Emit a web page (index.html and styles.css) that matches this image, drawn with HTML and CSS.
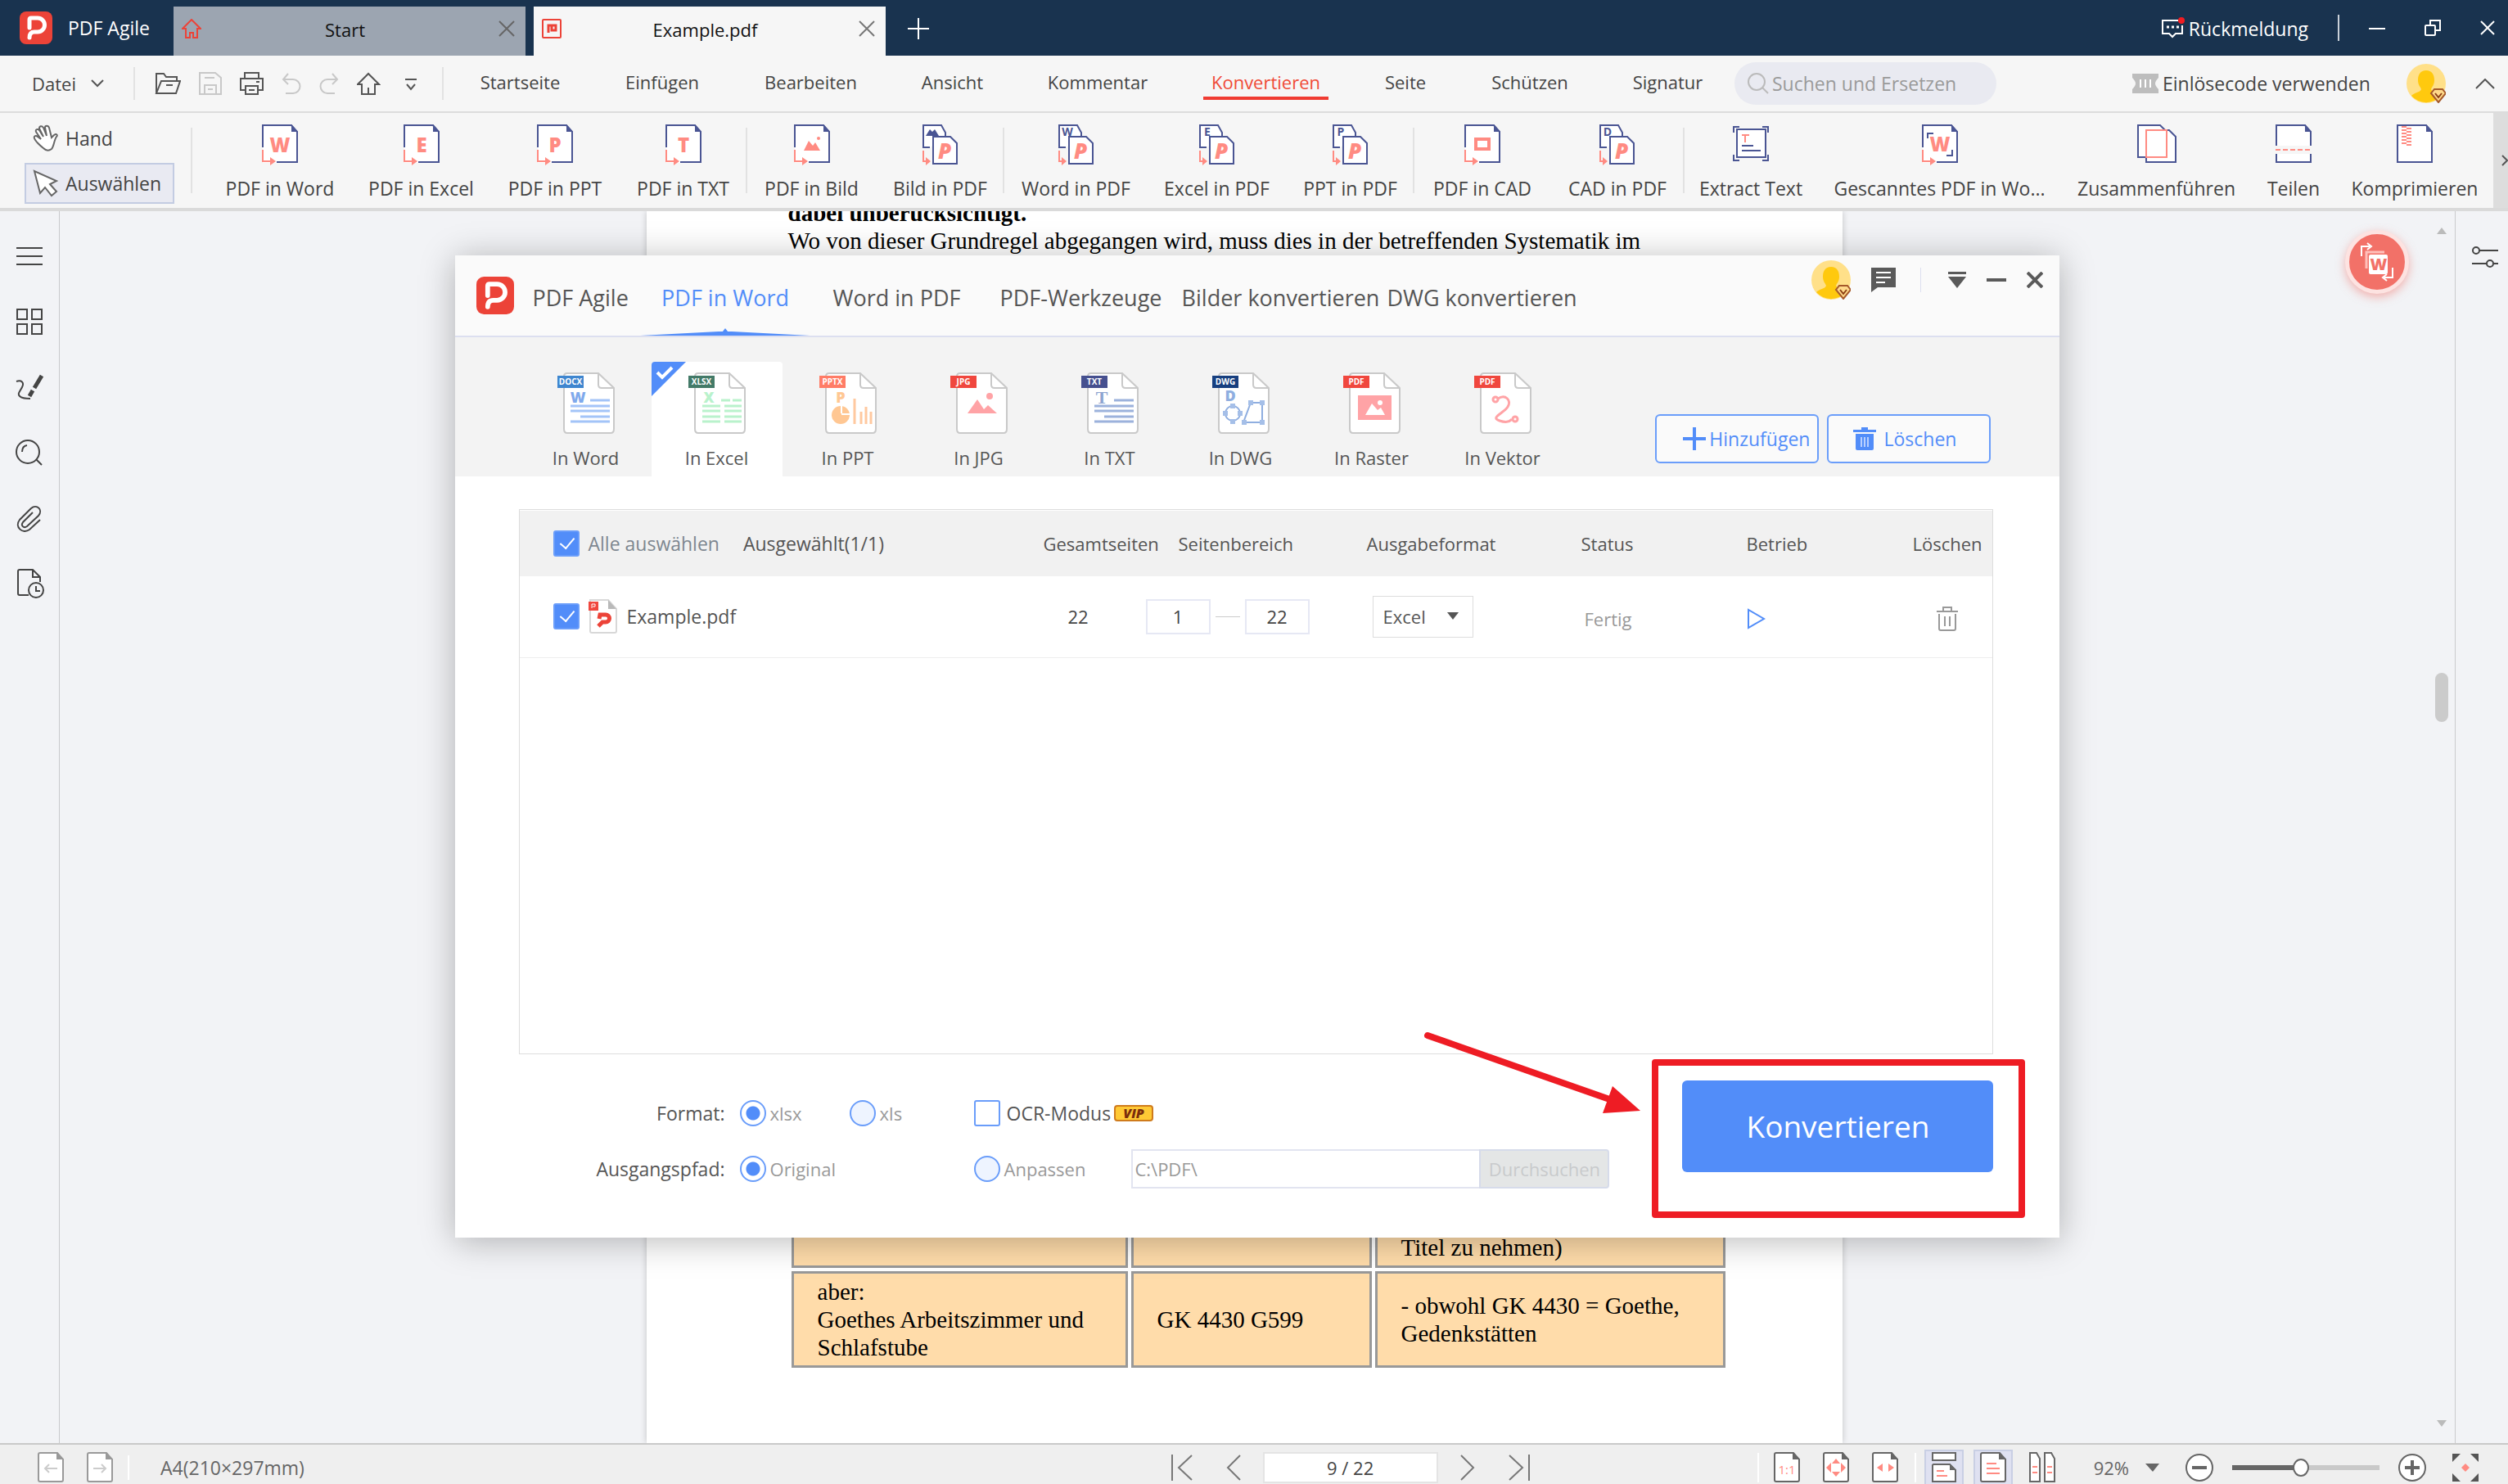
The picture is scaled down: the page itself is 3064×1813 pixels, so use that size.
FILE: index.html
```html
<!DOCTYPE html>
<html lang="de">
<head>
    <meta charset="UTF-8">
    <meta name="viewport" content="width=device-width, initial-scale=1.0">
    <title>PDF Agile</title>
    <link rel="stylesheet" href="styles.css">
</head>
<body>
    <!-- shared icon shapes -->
    <svg class="defs" width="0" height="0">
        <symbol id="logo" viewBox="0 0 40 40">
            <rect width="40" height="40" rx="8" fill="#ec4338"/>
            <path d="M12 20V10q0-2 2-2h8a8 8 0 0 1 0 17h-4q-6 0-6 7" fill="none" stroke="#fff" stroke-width="5" stroke-linecap="round" stroke-linejoin="round"/>
        </symbol>
        <symbol id="avatar" viewBox="0 0 48 48">
            <circle cx="24" cy="24" r="24" fill="#ffe089"/>
            <path d="M24 8c7 0 10 5 10 12 0 6-3 8-4 11 1 4 9 4 12 8a24 24 0 0 1-36 0c3-4 11-4 12-8-1-3-4-5-4-11 0-7 3-12 10-12z" fill="#ffc90e"/>
            <path d="M34 31h10l4 5-9 11-9-11z" fill="#ffd98a" stroke="#a5592a" stroke-width="2"/>
            <path d="M35 36l4 5 4-5" fill="none" stroke="#8a3d14" stroke-width="2"/>
        </symbol>
        <symbol id="doc" viewBox="0 0 44 54">
            <path d="M1 1h35l7 8v38H1z" fill="#fff"/>
            <path d="M1 28V1h35l7 8v37H18" fill="none" stroke="#4a5593" stroke-width="2"/>
            <path d="M36 0v9h8z" fill="#4a5593"/>
            <path d="M1 31v14h10" fill="none" stroke="#ff8b82" stroke-width="2"/>
            <path d="M10 40l7 5-7 5z" fill="#ff8b82"/>
        </symbol>
        <symbol id="plain" viewBox="0 0 44 54">
            <path d="M1 1h35l7 8v37H1z" fill="#fff" stroke="#4a5593" stroke-width="2"/>
            <path d="M36 0v9h8z" fill="#4a5593"/>
        </symbol>
        <symbol id="pair" viewBox="0 0 44 54">
            <path d="M9 28H1V1h22l5 9v6" fill="#fff" stroke="#4a5593" stroke-width="2"/>
            <path d="M13 15h21l8 8v25H13z" fill="#fff" stroke="#4a5593" stroke-width="2"/>
            <path d="M1 32v13h4" fill="none" stroke="#ff8b82" stroke-width="2"/>
            <path d="M4 40l6 5-6 5z" fill="#ff8b82"/>
            <text x="27" y="42" class="pair-p">P</text>
        </symbol>
        <symbol id="file" viewBox="0 0 70 76">
            <path d="M8 5q0-4 4-4h38l19 18v50q0 5-4 5H12q-4 0-4-5z" fill="#fff" stroke="#c9c9c9" stroke-width="2"/>
            <path d="M50 1v14q0 4 4 4h15" fill="none" stroke="#c9c9c9" stroke-width="2"/>
        </symbol>
        <symbol id="lines" viewBox="0 0 70 76">
            <path d="M40 34h24M16 41h48M16 47h48M28 54h36M16 60h48" fill="none" stroke="currentColor" stroke-width="3"/>
        </symbol>
        <symbol id="page" viewBox="0 0 32 38">
            <path d="M3 1h21l7 8v25q0 2-2 2H3q-2 0-2-2V3q0-2 2-2z" fill="#fff" stroke="currentColor" stroke-width="2"/>
            <path d="M23 0v9h9z" fill="currentColor"/>
        </symbol>
    </svg>

    <!-- title bar -->
    <header class="titlebar">
        <div class="brand">
            <svg width="40" height="40"><use href="#logo"/></svg>
            <span>PDF Agile</span>
        </div>
        <div class="file-tab">
            <svg width="24" height="24" viewBox="0 0 24 24" fill="none" stroke="#ec4338" stroke-width="2"><path d="M1 12L12 1l11 11h-4v11h-5v-6h-4v6H5V12z"/></svg>
            <span>Start</span>
            <button class="icon-btn" aria-label="Tab schließen"><svg width="20" height="20" viewBox="0 0 20 20" stroke="#666" stroke-width="2"><path d="M1 1l18 18M19 1L1 19"/></svg></button>
        </div>
        <div class="file-tab current">
            <svg width="24" height="24" viewBox="0 0 24 24" fill="none" stroke="#ec4338"><rect x="1" y="1" width="22" height="22" rx="1" stroke-width="2"/><path d="M8 17V8h9v6h-5V9" stroke-width="3"/></svg>
            <span>Example.pdf</span>
            <button class="icon-btn" aria-label="Tab schließen"><svg width="20" height="20" viewBox="0 0 20 20" stroke="#777" stroke-width="2"><path d="M1 1l18 18M19 1L1 19"/></svg></button>
        </div>
        <button class="icon-btn new-tab" aria-label="Neuer Tab"><svg width="26" height="26" viewBox="0 0 26 26" stroke="#fff" stroke-width="2"><path d="M13 0v26M0 13h26"/></svg></button>
        <div class="window-tools">
            <a href="#" class="feedback">
                <svg width="28" height="26" viewBox="0 0 28 26" fill="none" stroke="#fff" stroke-width="2"><path d="M20 4H1v16h8l4 4 4-4h8V10"/><path d="M6 12h3M12 12h3M18 12h3" stroke-width="3"/><circle cx="24" cy="4" r="4" fill="#f01c22" stroke="none"/></svg>
                <span>Rückmeldung</span>
            </a>
            <i class="divider"></i>
            <button class="icon-btn" aria-label="Minimieren"><svg width="20" height="20" viewBox="0 0 20 20" stroke="#fff" stroke-width="2"><path d="M0 11h20"/></svg></button>
            <button class="icon-btn" aria-label="Verkleinern"><svg width="20" height="20" viewBox="0 0 20 20" fill="none" stroke="#fff" stroke-width="2"><rect x="1" y="7" width="12" height="12" rx="1"/><path d="M7 7V1h12v12h-6"/></svg></button>
            <button class="icon-btn" aria-label="Schließen"><svg width="18" height="18" viewBox="0 0 18 18" stroke="#fff" stroke-width="2"><path d="M1 1l16 16M17 1L1 17"/></svg></button>
        </div>
    </header>

    <!-- menu -->
    <nav class="menubar">
        <button class="datei">Datei <svg width="16" height="10" viewBox="0 0 16 10" fill="none" stroke="#555" stroke-width="2"><path d="M1 1l7 7 7-7"/></svg></button>
        <div class="quick">
            <svg width="32" height="28" viewBox="0 0 32 28" fill="none" stroke="#555" stroke-width="2"><path d="M2 26V2h9l3 4h13v5M2 26L8 11h23l-5 15z"/><path d="M14 16h8"/></svg>
            <svg width="28" height="28" viewBox="0 0 28 28" fill="none" stroke="#c8c8c8" stroke-width="2"><path d="M1 1h19l7 6v20H1zM7 7h12M7 27V16h14v11M11 21h6"/></svg>
            <svg width="29" height="28" viewBox="0 0 29 28" fill="none" stroke="#555" stroke-width="2"><path d="M6 8V1h17v7M6 22H1V8h27v14h-5M7 17h15v10H7zM11 22h7M20 12h4"/></svg>
            <svg width="24" height="28" viewBox="0 0 24 28" fill="none" stroke="#c8c8c8" stroke-width="2"><path d="M8 2L2 9l6 6M2 9h12a8 8 0 0 1 0 17H5"/></svg>
            <svg width="24" height="28" viewBox="0 0 24 28" fill="none" stroke="#c8c8c8" stroke-width="2"><path d="M16 2l6 7-6 6M22 9H10a8 8 0 0 0 0 17h9"/></svg>
            <svg width="29" height="28" viewBox="0 0 29 28" fill="none" stroke="#555" stroke-width="2"><path d="M1 15L14 2l13 13h-5v12H6V15zM14 27v-8"/></svg>
            <svg class="more" width="14" height="28" viewBox="0 0 14 28" fill="none" stroke="#555" stroke-width="2"><path d="M0 9h14M2 15l5 6 5-6"/></svg>
        </div>
        <div class="menu-tabs">
            <a href="#">Startseite</a>
            <a href="#">Einfügen</a>
            <a href="#">Bearbeiten</a>
            <a href="#">Ansicht</a>
            <a href="#">Kommentar</a>
            <a href="#" class="active">Konvertieren</a>
            <a href="#">Seite</a>
            <a href="#">Schützen</a>
            <a href="#">Signatur</a>
        </div>
        <label class="search">
            <svg width="26" height="26" viewBox="0 0 26 26" fill="none" stroke="#bbb" stroke-width="2"><circle cx="11" cy="11" r="10"/><path d="M18 18l7 7"/></svg>
            <input type="text" placeholder="Suchen und Ersetzen" aria-label="Suchen und Ersetzen">
        </label>
        <div class="account">
            <a href="#" class="redeem">
                <svg width="32" height="24" viewBox="0 0 32 24"><path d="M0 0h32v5q-4 4-4 7t4 7v5H0v-5q4-4 4-7T0 5z" fill="#bdbdbd"/><path d="M10 7v10M16 7v10M22 7v10" stroke="#fff" stroke-width="2"/></svg>
                <span>Einlösecode verwenden</span>
            </a>
            <svg width="48" height="48"><use href="#avatar"/></svg>
            <button class="icon-btn" aria-label="Menüband ausblenden"><svg width="24" height="13" viewBox="0 0 24 13" fill="none" stroke="#555" stroke-width="2"><path d="M1 12L12 1l11 11"/></svg></button>
        </div>
    </nav>

    <!-- ribbon -->
    <section class="ribbon">
        <div class="modes">
            <button class="mode"><svg width="34" height="34" viewBox="0 0 34 34" fill="#fff" stroke="#666" stroke-width="2"><path d="M13 29C9 26 3 20 2 17s2-4 4-2l4 3L4 9c-1-3 2-4 4-2l5 8-5-10c0-3 3-4 5-1l4 10-2-10c0-3 4-3 5 0l3 12 3-3c3-2 5 0 3 2-3 4-3 12-6 15-4 3-7 2-10-1z"/></svg>Hand</button>
            <button class="mode selected"><svg width="34" height="34" viewBox="0 0 34 34" fill="#fff" stroke="#666" stroke-width="2"><path d="M2 2l7 27 6-7 8 10 6-5-8-9 8-4z"/></svg>Auswählen</button>
        </div>
        <div class="tools">
            <button><svg width="44" height="54"><use href="#doc"/><text x="22" y="34" class="letter">W</text></svg>PDF in Word</button>
            <button><svg width="44" height="54"><use href="#doc"/><text x="22" y="34" class="letter">E</text></svg>PDF in Excel</button>
            <button><svg width="44" height="54"><use href="#doc"/><text x="22" y="34" class="letter">P</text></svg>PDF in PPT</button>
            <button class="split"><svg width="44" height="54"><use href="#doc"/><text x="22" y="34" class="letter">T</text></svg>PDF in TXT</button>
            <button><svg width="44" height="54"><use href="#doc"/><path d="M12 32l6-12 5 6 3-4 6 10z" fill="#ff8b82"/><circle cx="30" cy="17" r="2" fill="#ff8b82"/></svg>PDF in Bild</button>
            <button class="split"><svg width="44" height="54"><use href="#pair"/><path d="M4 14l5-8 3 3 3-3 5 8z" fill="#4a5593"/></svg>Bild in PDF</button>
            <button><svg width="44" height="54"><use href="#pair"/><text x="11" y="14" class="small-letter">W</text></svg>Word in PDF</button>
            <button><svg width="44" height="54"><use href="#pair"/><text x="10" y="14" class="small-letter">E</text></svg>Excel in PDF</button>
            <button class="split"><svg width="44" height="54"><use href="#pair"/><text x="10" y="14" class="small-letter">P</text></svg>PPT in PDF</button>
            <button><svg width="44" height="54"><use href="#doc"/><rect x="14" y="18" width="16" height="12" fill="none" stroke="#ff8b82" stroke-width="4"/></svg>PDF in CAD</button>
            <button class="split"><svg width="44" height="54"><use href="#pair"/><text x="10" y="14" class="small-letter">D</text></svg>CAD in PDF</button>
            <button><svg width="44" height="54" viewBox="0 0 44 54" fill="none" stroke="#4a5593" stroke-width="2"><rect x="5" y="6" width="35" height="34" fill="#fff"/><path d="M1 10V3h7M36 3h7v7M43 37v7h-7M8 44H1v-7M11 26h14M11 32h23"/><path d="M11 13h9M15 13v9" stroke="#ff8b82"/></svg>Extract Text</button>
            <button><svg width="44" height="54"><use href="#doc"/><text x="22" y="33" class="letter">W</text><path d="M7 17v-6h7M37 31v7h-7" fill="none" stroke="#4a5593" stroke-width="2"/></svg>Gescanntes PDF in Wo...</button>
            <button><svg width="48" height="54" viewBox="0 0 48 54" fill="#fff" stroke="#4a5593" stroke-width="2"><path d="M1 1h27l8 8v31H1z"/><path d="M11 40v6h36V15l-8-8h-6" /><path d="M11 7h25v33H11z" stroke="#ff8b82"/></svg>Zusammenführen</button>
            <button><svg width="44" height="54" viewBox="0 0 44 54"><use href="#plain"/><path d="M0 26h44v10H0z" fill="#f6f6f6"/><path d="M0 31h44" stroke="#ff8b82" stroke-width="2" stroke-dasharray="6 3"/></svg>Teilen</button>
            <button><svg width="44" height="54" viewBox="0 0 44 54"><use href="#plain"/><path d="M9 2v24" stroke="#ff8b82" stroke-width="6" stroke-dasharray="2 2"/><path d="M15 4v22" stroke="#ff8b82" stroke-width="6" stroke-dasharray="2 2"/></svg>Komprimieren</button>
        </div>
        <button class="scroll-right" aria-label="Weiter"><svg width="8" height="14" viewBox="0 0 8 14" fill="none" stroke="#555" stroke-width="2"><path d="M1 1l6 6-6 6"/></svg></button>
    </section>

    <div class="main">
        <aside class="side">
            <svg width="36" height="36" viewBox="0 0 36 36"><path d="M2 8h32M2 18h32M2 28h32"/></svg>
            <svg width="36" height="36" viewBox="0 0 36 36"><path d="M3 3h12v12H3zM21 3h12v12H21zM3 21h12v12H3zM21 21h12v12H21z"/></svg>
            <svg width="36" height="36" viewBox="0 0 36 36"><path d="M2 11c6-2 10 1 7 7s-6 8-3 11 7 3 13 3"/><path d="M33 4l-9 15M22 22l-4 7" stroke-width="5"/></svg>
            <svg width="36" height="36" viewBox="0 0 36 36"><circle cx="16" cy="17" r="14"/><path d="M26 26l7 7M9 17q0-7 6-8"/></svg>
            <svg width="36" height="36" viewBox="0 0 36 36"><path d="M31 20L18 32c-8 6-19-3-12-12L20 6c7-6 15 2 9 9L15 28c-4 3-8-1-5-5l12-12"/></svg>
            <svg width="36" height="36" viewBox="0 0 36 36"><path d="M17 32H6q-2 0-2-2V3q0-2 2-2h16l9 9v6M22 1v9h9"/><circle cx="26" cy="26" r="9"/><path d="M26 21v6h5"/></svg>
        </aside>

        <div class="viewer">
            <div class="page">
                <p><b>dabei unberücksichtigt.</b><br>Wo von dieser Grundregel abgegangen wird, muss dies in der betreffenden Systematik im</p>
                <table class="doc-table">
                    <tr class="cut">
                        <td></td>
                        <td></td>
                        <td>Titel zu nehmen)</td>
                    </tr>
                    <tr>
                        <td>aber:<br>Goethes Arbeitszimmer und<br>Schlafstube</td>
                        <td>GK 4430 G599</td>
                        <td>- obwohl GK 4430 = Goethe,<br>Gedenkstätten</td>
                    </tr>
                </table>
            </div>
        </div>
        <div class="scrollbar">
            <svg width="12" height="8" viewBox="0 0 12 8" fill="#bbb"><path d="M0 8l6-8 6 8z"/></svg>
            <i class="thumb"></i>
            <svg width="12" height="8" viewBox="0 0 12 8" fill="#bbb"><path d="M0 0l6 8 6-8z"/></svg>
        </div>

        <button class="float-convert" aria-label="Konvertieren">
            <svg width="44" height="48" viewBox="0 0 44 48" fill="none" stroke="#fff" stroke-width="2"><path d="M3 17V5h10M10 1l5 4-5 4"/><path d="M41 31v12H31M34 39l-5 4 5 4"/><path d="M9 32V12h22" stroke="#ffc0ba" stroke-width="3"/><rect x="12" y="15" width="23" height="24" rx="2" fill="#fff" stroke="none"/><text x="24" y="34" class="float-w">W</text></svg>
        </button>

        <!-- converter window -->
        <section class="dialog">
            <header class="dialog-head">
                <div class="dialog-brand">
                    <svg width="46" height="46"><use href="#logo"/></svg>
                    <span>PDF Agile</span>
                </div>
                <nav class="dialog-tabs">
                    <a href="#" class="active">PDF in Word</a>
                    <a href="#">Word in PDF</a>
                    <a href="#">PDF-Werkzeuge</a>
                    <a href="#">Bilder konvertieren</a>
                    <a href="#">DWG konvertieren</a>
                </nav>
                <div class="dialog-tools">
                    <svg width="48" height="48"><use href="#avatar"/></svg>
                    <svg width="30" height="30" viewBox="0 0 30 30"><path d="M0 0h30v24H8l-8 6z" fill="#5a5a5a"/><path d="M6 6h18M6 12h18M6 18h11" stroke="#fff" stroke-width="2"/></svg>
                    <i class="divider"></i>
                    <button class="icon-btn" aria-label="Menü"><svg width="22" height="20" viewBox="0 0 22 20" fill="#5a5a5a"><path d="M0 0h22v3H0zM0 6h22L11 20z"/></svg></button>
                    <button class="icon-btn" aria-label="Minimieren"><svg width="24" height="20" viewBox="0 0 24 20"><path d="M0 10h24" stroke="#5a5a5a" stroke-width="4"/></svg></button>
                    <button class="icon-btn" aria-label="Schließen"><svg width="20" height="20" viewBox="0 0 20 20" stroke="#5a5a5a" stroke-width="4"><path d="M1 1l18 18M19 1L1 19"/></svg></button>
                </div>
            </header>

            <div class="formats">
                <button class="format"><svg width="70" height="76"><use href="#file"/><use href="#lines" color="#a3c4f8"/><text x="25" y="37" class="mark" fill="#7fa9ec">W</text><rect y="4" width="32" height="15" fill="#3f86cf"/><text x="16" y="15" class="tag">DOCX</text></svg>In Word</button>
                <button class="format picked"><svg class="corner" width="42" height="42" viewBox="0 0 42 42"><path d="M0 4q0-4 4-4h38L0 42z" fill="#528df9"/><path d="M7 13l6 6L25 7" fill="none" stroke="#fff" stroke-width="4"/></svg><svg width="70" height="76"><use href="#file"/><path d="M40 34h11M54 34h11M17 41h22M44 41h21M17 47h22M44 47h21M17 54h22M44 54h21M17 60h22M44 60h21" stroke="#b9f2cc" stroke-width="3"/><text x="25" y="37" class="mark" fill="#b9f2cc">X</text><rect y="4" width="32" height="15" fill="#437a68"/><text x="16" y="15" class="tag">XLSX</text></svg>In Excel</button>
                <button class="format"><svg width="70" height="76"><use href="#file"/><circle cx="26" cy="52" r="11" fill="#ffc793"/><path d="M27 50V40M27 51h11" stroke="#fff" stroke-width="2"/><path d="M43 63V32M51 63V48M57 63V42M63 63V48" stroke="#ffc9a0" stroke-width="3"/><text x="26" y="37" class="mark" fill="#ffc793">P</text><rect y="4" width="32" height="15" fill="#ff7c66"/><text x="16" y="15" class="tag">PPTX</text></svg>In PPT</button>
                <button class="format"><svg width="70" height="76"><use href="#file"/><path d="M21 50l12-17 8 12 5-5 11 10z" fill="#ffa3a6"/><circle cx="48" cy="29" r="4" fill="#ffa3a6"/><rect y="4" width="32" height="15" fill="#f0473e"/><text x="16" y="15" class="tag">JPG</text></svg>In JPG</button>
                <button class="format"><svg width="70" height="76"><use href="#file"/><use href="#lines" color="#9cb2dc"/><text x="25" y="38" class="mark serif" fill="#8ea4d0">T</text><rect y="4" width="32" height="15" fill="#46508f"/><text x="16" y="15" class="tag">TXT</text></svg>In TXT</button>
                <button class="format"><svg width="70" height="76"><use href="#file"/><g fill="none" stroke="#8faee0" stroke-width="2"><circle cx="25" cy="50" r="9"/><path d="M38 61l9-24h14v24z"/></g><path d="M22 38h6v6h-6zM22 57h6v6h-6zM13 47h6v6h-6zM31 47h6v6h-6zM36 58h6v6h-6zM58 58h6v6h-6zM44 34h6v6h-6zM58 34h6v6h-6z" fill="#a5bfe8"/><text x="22" y="35" class="mark" fill="#8faee0">D</text><rect y="4" width="32" height="15" fill="#173f7f"/><text x="16" y="15" class="tag">DWG</text></svg>In DWG</button>
                <button class="format"><svg width="70" height="76"><use href="#file"/><rect x="18" y="28" width="41" height="30" fill="#ffa3a6"/><path d="M27 52l8-14 7 8 4-3 5 9z" fill="#fff"/><circle cx="45" cy="37" r="3" fill="#fff"/><rect y="4" width="32" height="15" fill="#f0473e"/><text x="16" y="15" class="tag">PDF</text></svg>In Raster</button>
                <button class="format"><svg width="70" height="76"><use href="#file"/><g fill="none" stroke="#ffa3a6" stroke-width="3"><path d="M29 32c9-6 17 2 12 10s-22 13-10 17 14-1 15-2"/><circle cx="26" cy="33" r="3"/><circle cx="50" cy="57" r="3"/></g><rect y="4" width="32" height="15" fill="#f0473e"/><text x="16" y="15" class="tag">PDF</text></svg>In Vektor</button>
                <div class="list-actions">
                    <button class="outline"><svg width="28" height="28" viewBox="0 0 28 28" stroke="#528df9" stroke-width="4"><path d="M14 0v28M0 14h28"/></svg>Hinzufügen</button>
                    <button class="outline wide"><svg width="28" height="28" viewBox="0 0 28 28"><path d="M0 3h28v3H0zM10 0h8v4h-8zM3 8h22v18q0 2-2 2H5q-2 0-2-2z" fill="#528df9"/><path d="M10 12v12M14 12v12M18 12v12" stroke="#b9d0ff" stroke-width="2"/></svg>Löschen</button>
                </div>
            </div>

            <div class="list">
                <table class="files">
                    <colgroup>
                        <col class="c-name"><col class="c-pages"><col class="c-range"><col class="c-format"><col class="c-status"><col class="c-run"><col>
                    </colgroup>
                    <thead>
                        <tr>
                            <th>
                                <div class="name-cell">
                                    <input type="checkbox" class="check" id="all" checked>
                                    <label for="all" class="muted">Alle auswählen</label>
                                    <span class="count">Ausgewählt(1/1)</span>
                                </div>
                            </th>
                            <th>Gesamtseiten</th>
                            <th class="indent">Seitenbereich</th>
                            <th>Ausgabeformat</th>
                            <th>Status</th>
                            <th>Betrieb</th>
                            <th>Löschen</th>
                        </tr>
                    </thead>
                    <tbody>
                        <tr>
                            <td>
                                <div class="name-cell">
                                    <input type="checkbox" class="check" id="f1" checked>
                                    <svg width="36" height="42" viewBox="0 0 36 42"><path d="M2 1h22l10 11v27q0 2-2 2H4q-2 0-2-2z" fill="#fff" stroke="#d8d8d8" stroke-width="2"/><path d="M24 1v11h10z" fill="#b9b9b9"/><rect y="3" width="12" height="11" fill="#f0473e"/><path d="M4 11V6h4v3H5" fill="none" stroke="#fff" stroke-width="1"/><path d="M13 24l1-5h7a4 4 0 0 1 0 9h-4l-5 5" fill="none" stroke="#ec4338" stroke-width="5"/></svg>
                                    <label for="f1">Example.pdf</label>
                                </div>
                            </td>
                            <td class="pages">22</td>
                            <td>
                                <div class="range">
                                    <input type="text" value="1" aria-label="Von Seite">
                                    <i></i>
                                    <input type="text" value="22" aria-label="Bis Seite">
                                </div>
                            </td>
                            <td>
                                <div class="select-box">
                                    <select aria-label="Ausgabeformat"><option>Excel</option></select>
                                </div>
                            </td>
                            <td class="state">Fertig</td>
                            <td class="run"><button class="icon-btn" aria-label="Starten"><svg width="24" height="26" viewBox="0 0 24 26" fill="none" stroke="#528df9" stroke-width="2"><path d="M2 2v22l19-11z"/></svg></button></td>
                            <td class="remove"><button class="icon-btn" aria-label="Löschen"><svg width="26" height="30" viewBox="0 0 26 30" fill="none" stroke="#999" stroke-width="2"><path d="M0 6h26M8 6V1h10v5M3 9v18q0 2 2 2h16q2 0 2-2V9M10 12v12M16 12v12"/></svg></button></td>
                        </tr>
                    </tbody>
                </table>
            </div>

            <footer class="options">
                <div class="option-grid">
                    <span class="caption">Format:</span>
                    <div class="choices">
                        <label class="pair-label"><input type="radio" name="format" checked>xlsx</label>
                        <label class="pair-label"><input type="radio" name="format">xls</label>
                    </div>
                    <label class="pair-label dark"><input type="checkbox" class="check" >OCR-Modus<svg width="48" height="20" viewBox="0 0 48 20"><rect x="1" y="1" width="46" height="18" rx="3" fill="#ffc935" stroke="#cf7b1c" stroke-width="2"/><text x="24" y="16" class="vip">VIP</text></svg></label>
                    <span class="caption">Ausgangspfad:</span>
                    <label class="pair-label"><input type="radio" name="path" checked>Original</label>
                    <div class="custom">
                        <label class="pair-label"><input type="radio" name="path">Anpassen</label>
                        <div class="path">
                            <input type="text" value="C:\PDF\" aria-label="Pfad">
                            <button disabled>Durchsuchen</button>
                        </div>
                    </div>
                </div>
                <button class="convert">Konvertieren</button>
            </footer>

            <!-- callout: arrow and frame round the convert button -->
            <svg class="arrow" width="270" height="106" viewBox="0 0 270 106"><path d="M8 8l228 80" stroke="#ee1c24" stroke-width="8" stroke-linecap="round"/><path d="M234 70l34 30-46 3z" fill="#ee1c24"/></svg>
            <i class="frame"></i>
        </section>

        <aside class="side right">
            <svg width="36" height="36" viewBox="0 0 36 36"><circle cx="7" cy="10" r="4"/><path d="M11 10h23M2 26h18M28 26h6"/><circle cx="24" cy="26" r="4"/></svg>
        </aside>
    </div>

    <!-- status bar -->
    <footer class="statusbar">
        <div class="status-left">
            <svg width="32" height="38" color="#999"><use href="#page"/><path d="M24 20H9M14 15l-5 5 5 5" fill="none" stroke="#ccc" stroke-width="2"/></svg>
            <svg width="32" height="38" color="#999"><use href="#page"/><path d="M8 20h15M18 15l5 5-5 5" fill="none" stroke="#ccc" stroke-width="2"/></svg>
            <span>A4(210×297mm)</span>
        </div>
        <div class="pager">
            <button class="icon-btn" aria-label="Erste Seite"><svg width="26" height="32" viewBox="0 0 26 32"><path d="M1 0v32M25 1L9 16l16 15"/></svg></button>
            <button class="icon-btn" aria-label="Vorherige Seite"><svg width="18" height="32" viewBox="0 0 18 32"><path d="M17 1L2 16l15 15"/></svg></button>
            <input type="text" value="9 / 22" aria-label="Seite">
            <button class="icon-btn" aria-label="Nächste Seite"><svg width="18" height="32" viewBox="0 0 18 32"><path d="M1 1l15 15L1 31"/></svg></button>
            <button class="icon-btn" aria-label="Letzte Seite"><svg width="26" height="32" viewBox="0 0 26 32"><path d="M25 0v32M1 1l16 15L1 31"/></svg></button>
        </div>
        <div class="status-right">
            <i class="bar"></i>
            <button class="view" aria-label="Originalgröße"><svg width="32" height="38"><use href="#page"/><text x="16" y="27" class="one">1:1</text></svg></button>
            <button class="view" aria-label="Ganze Seite"><svg width="32" height="38"><use href="#page"/><path d="M16 8l5 6H11zM16 30l-5-6h10zM10 13v12l-6-6zM22 13v12l6-6z" fill="#ff8b82"/></svg></button>
            <button class="view" aria-label="Seitenbreite"><svg width="32" height="38"><use href="#page"/><path d="M13 14v10l-7-5zM20 14v10l7-5z" fill="#ff8b82"/></svg></button>
            <i class="bar"></i>
            <button class="view on" aria-label="Fortlaufend"><svg width="32" height="38" viewBox="0 0 32 38"><path d="M2 1h28v9H2zM3 15h20l7 7v14H2V16z" fill="#fff" stroke="#666" stroke-width="2"/><path d="M23 14v8h8z" fill="#666"/><path d="M7 23h9M7 29h13" stroke="#ff8b82" stroke-width="2"/></svg></button>
            <button class="view on" aria-label="Einzelseite"><svg width="32" height="38"><use href="#page"/><path d="M8 14h12M8 20h16M8 26h16" stroke="#ff8b82" stroke-width="2"/></svg></button>
            <button class="view" aria-label="Doppelseite"><svg width="32" height="38" viewBox="0 0 32 38"><path d="M1 1h8l4 7v28H1zM19 1h8l4 7v28H19z" fill="#fff" stroke="#666" stroke-width="2"/><path d="M4 18h6M4 25h6M22 18h6M22 25h6" stroke="#ff8b82" stroke-width="2"/></svg></button>
            <span class="zoom">92%</span>
            <svg width="17" height="10" viewBox="0 0 17 10" fill="#666"><path d="M0 0h17l-8 10z"/></svg>
            <button class="icon-btn minus" aria-label="Verkleinern"><svg width="36" height="36" viewBox="0 0 36 36" fill="#fff" stroke="#666" stroke-width="2"><circle cx="18" cy="18" r="16"/><path d="M9 18h18" stroke-width="4"/></svg></button>
            <input type="range" min="0" max="100" value="46" aria-label="Zoom">
            <button class="icon-btn" aria-label="Vergrößern"><svg width="36" height="36" viewBox="0 0 36 36" fill="#fff" stroke="#666" stroke-width="2"><circle cx="18" cy="18" r="16"/><path d="M9 18h18M18 9v18" stroke-width="4"/></svg></button>
            <button class="icon-btn full" aria-label="Vollbild"><svg width="32" height="34" viewBox="0 0 32 34"><path d="M0 0h10L0 10zM32 0H22l10 10zM0 34h10L0 24zM32 34H22l10-10z" fill="#555"/><path d="M16 12l5 5-5 5-5-5z" fill="#ff8b82"/></svg></button>
        </div>
    </footer>
</body>
</html>
```
FILE: styles.css
```css
* {
    box-sizing: border-box;
    margin: 0;
    padding: 0;
}
body {
    display: flex;
    flex-direction: column;
    height: 100vh;
    overflow: hidden;
    font-family: "Open Sans", "Noto Sans", sans-serif;
    font-size: 22px;
    line-height: 30px;
    color: #444;
    background: #f2f3f6;
}
button,
input,
select {
    font: inherit;
    color: inherit;
    border: 0;
    background: none;
    outline: 0;
}
a {
    color: inherit;
    text-decoration: none;
}
svg {
    display: block;
    flex: none;
}
.defs {
    display: none;
}
.icon-btn {
    display: flex;
    flex: none;
}

/* title bar */
.titlebar {
    display: flex;
    flex: none;
    align-items: flex-end;
    height: 68px;
    padding-right: 16px;
    background: #19334f;
    color: #fff;
}
.brand {
    display: flex;
    align-items: center;
    gap: 19px;
    width: 212px;
    height: 68px;
    padding-left: 24px;
    font-size: 23px;
}
.file-tab {
    display: flex;
    align-items: center;
    width: 430px;
    height: 60px;
    margin-right: 10px;
    padding: 0 13px 20px 10px;
    background: #9ca5b1;
    color: #111;
}
.file-tab span {
    flex: 1;
    padding: 16px 12px 0 0;
    text-align: center;
}
.file-tab svg {
    margin-top: 14px;
}
.file-tab.current {
    background: #f6f6f6;
}
.new-tab {
    margin: 0 0 20px 17px;
}
.window-tools {
    display: flex;
    align-items: center;
    gap: 48px;
    height: 68px;
    margin-left: auto;
}
.feedback {
    display: flex;
    align-items: center;
    gap: 5px;
}
.feedback span {
    padding-top: 2px;
    font-size: 23px;
}
.window-tools .divider {
    width: 2px;
    height: 32px;
    margin: 0 -12px;
    background: #c9d0d8;
}

/* menu */
.menubar {
    display: flex;
    flex: none;
    align-items: center;
    height: 70px;
    padding-right: 16px;
    border-bottom: 2px solid #dcdcdc;
    background: #f6f6f6;
}
.datei {
    display: flex;
    align-items: center;
    gap: 18px;
    width: 165px;
    height: 40px;
    padding-left: 39px;
    border-right: 2px solid #e2e2e2;
}
.quick {
    display: flex;
    align-items: center;
    gap: 22px;
    width: 377px;
    height: 40px;
    padding-left: 24px;
    border-right: 2px solid #e2e2e2;
}
.quick .more {
    margin-left: 8px;
}
.menu-tabs {
    display: grid;
    flex: 1;
    grid-template-columns: 175fr 172fr 191fr 155fr 200fr 211fr 130fr 174fr 163fr;
    margin-left: 6px;
    text-align: center;
}
.menu-tabs a {
    justify-self: center;
    height: 40px;
    padding: 3px 10px 0;
    border-bottom: 4px solid transparent;
}
.menu-tabs .active {
    border-color: #f03b32;
    color: #f04a37;
}
.search {
    display: flex;
    align-items: center;
    gap: 4px;
    width: 320px;
    height: 52px;
    padding-left: 16px;
    border-radius: 26px;
    background: #e9eaf1;
}
.search input {
    width: 250px;
    font-size: 23px;
}
.search input::placeholder {
    color: #9a9a9a;
    opacity: 1;
}
.account {
    display: flex;
    align-items: center;
    justify-content: space-between;
    width: 443px;
    margin-left: 166px;
}
.redeem {
    display: flex;
    align-items: center;
    gap: 5px;
    margin-right: 8px;
    font-size: 23px;
}

/* ribbon */
.ribbon {
    display: flex;
    flex: none;
    height: 120px;
    border-bottom: 4px solid #dadada;
    background: #f6f6f6;
}
.modes {
    display: flex;
    flex-direction: column;
    width: 255px;
    padding: 6px 42px 0 30px;
    position: relative;
}
.modes::after,
.split::after {
    content: "";
    position: absolute;
    right: 20px;
    top: 18px;
    width: 2px;
    height: 80px;
    background: #e2e2e2;
}
.mode {
    display: flex;
    align-items: center;
    gap: 6px;
    height: 51px;
    margin-bottom: 5px;
    padding-left: 8px;
    border: 2px solid transparent;
    font-size: 23px;
}
.selected {
    border-color: #c3cce2;
    background: #e9eaf2;
}
.tools {
    display: grid;
    flex: 1;
    grid-template-columns: 174fr 171fr 156fr 157fr 157fr 157fr 175fr 169fr 157fr 166fr 164fr 162fr 299fr 231fr 104fr 192fr;
}
.tools button {
    display: flex;
    flex-direction: column;
    align-items: center;
    gap: 9px;
    position: relative;
    padding-top: 14px;
    font-size: 23px;
    white-space: nowrap;
}
.tools .split::after {
    right: 0;
}
.letter {
    fill: #ff8b82;
    font-size: 24px;
    font-weight: 800;
    text-anchor: middle;
}
.small-letter {
    fill: #4a5593;
    font-size: 14px;
    font-weight: 700;
    text-anchor: middle;
}
.pair-p {
    fill: #ff8b82;
    font-size: 26px;
    font-style: italic;
    font-weight: 800;
    text-anchor: middle;
}
.scroll-right {
    display: flex;
    align-items: center;
    justify-content: flex-end;
    width: 18px;
    background: #ddd;
}

/* work area */
.main {
    display: flex;
    flex: 1;
    min-height: 0;
    position: relative;
}
.side {
    display: flex;
    flex-direction: column;
    align-items: center;
    gap: 44px;
    width: 73px;
    padding-top: 37px;
    border-right: 1px solid #c9cacc;
}
.side svg {
    fill: none;
    stroke: #444;
    stroke-width: 2;
}
.side.right {
    width: 65px;
    padding-top: 38px;
    padding-left: 8px;
    border-right: 0;
    border-left: 1px solid #c9cacc;
}
.viewer {
    display: flex;
    flex: 1;
    justify-content: center;
    overflow: hidden;
}
.page {
    display: flex;
    flex-direction: column;
    justify-content: space-between;
    width: 50.5%;
    padding: 0 0 88px 173px;
    background: #fff;
    box-shadow: 0 0 8px rgba(0, 0, 0, .2);
    font: 29px/34px "Liberation Serif", "Times New Roman", serif;
    color: #000;
}
.page p {
    margin: -15px 0 0;
    white-space: nowrap;
}
.doc-table {
    width: 1149px;
    border-spacing: 4px;
    table-layout: fixed;
}
.doc-table td {
    width: 294px;
    padding: 5px 0 5px 29px;
    border: 3px solid #999;
    background: #ffdcaa;
}
.doc-table td:first-child {
    width: 411px;
}
.doc-table td:last-child {
    width: auto;
}
.doc-table .cut td {
    height: 80px;
    vertical-align: bottom;
}
.scrollbar {
    display: flex;
    flex-direction: column;
    align-items: center;
    justify-content: space-between;
    width: 31px;
    padding: 20px 1px 20px 0;
    position: relative;
}
.thumb {
    position: absolute;
    top: 564px;
    width: 16px;
    height: 60px;
    border-radius: 8px;
    background: #cbcbcb;
}
.float-convert {
    display: flex;
    align-items: center;
    justify-content: center;
    position: absolute;
    top: 23px;
    right: 121px;
    width: 78px;
    height: 78px;
    border: 5px solid #fde3e1;
    border-radius: 50%;
    background: #f27168;
    box-shadow: 0 4px 12px rgba(242, 113, 104, .5);
}
.float-w {
    fill: #f27168;
    stroke: none;
    font-size: 20px;
    font-weight: 800;
    text-anchor: middle;
}

/* converter window */
.dialog {
    display: flex;
    flex-direction: column;
    position: absolute;
    top: 54px;
    right: 65px;
    bottom: 251px;
    left: 73px;
    width: 64%;
    margin: 0 auto;
    background: #fff;
    box-shadow: 0 4px 40px rgba(0, 0, 0, .28);
    color: #555;
}
.dialog-head {
    display: flex;
    flex: none;
    height: 100px;
    border-bottom: 2px solid #dcdff0;
    background: #fafafa;
    font-size: 27px;
}
.dialog-brand {
    display: flex;
    align-items: center;
    gap: 23px;
    width: 227px;
    padding-left: 26px;
}
.dialog-brand span {
    padding-top: 6px;
}
.dialog-tabs {
    display: grid;
    grid-template-columns: 207px 212px 238px 250px 242px;
    padding-top: 37px;
    text-align: center;
    white-space: nowrap;
}
.dialog-tabs a {
    position: relative;
}
.dialog-tabs .active {
    color: #528df9;
}
.dialog-tabs .active::before {
    content: "";
    position: absolute;
    right: 0;
    bottom: 0;
    left: 0;
    height: 5px;
    background: #528df9;
    clip-path: polygon(0 100%, 46% 0, 54% 0, 100% 100%);
}
.dialog-tabs .active::after {
    content: "";
    position: absolute;
    bottom: 0;
    left: 50%;
    margin-left: -7px;
    border: 7px solid transparent;
    border-top: 0;
    border-bottom: 9px solid #528df9;
}
.dialog-tools {
    display: flex;
    align-items: center;
    gap: 25px;
    height: 60px;
    margin-left: auto;
    padding-right: 20px;
}
.dialog-tools .divider {
    width: 1px;
    height: 30px;
    margin: 0 8px 0 5px;
    background: #dcdff0;
}
.formats {
    display: flex;
    flex: none;
    align-items: flex-end;
    height: 170px;
    padding-left: 80px;
    background: #f3f3f3;
}
.format {
    display: flex;
    flex-direction: column;
    align-items: center;
    gap: 13px;
    position: relative;
    width: 160px;
    height: 140px;
    padding-top: 13px;
    border-radius: 4px 4px 0 0;
}
.picked {
    background: #fff;
}
.corner {
    position: absolute;
    top: 0;
    left: 0;
}
.mark {
    font-size: 18px;
    font-weight: 800;
    text-anchor: middle;
}
.serif {
    font-family: "Liberation Serif", serif;
    font-size: 22px;
}
.tag {
    fill: #fff;
    font-size: 10px;
    font-weight: 700;
    text-anchor: middle;
}
.list-actions {
    display: flex;
    gap: 10px;
    margin-left: auto;
    padding: 0 84px 16px 0;
}
.outline {
    display: flex;
    align-items: center;
    justify-content: flex-end;
    gap: 4px;
    width: 200px;
    height: 60px;
    padding-right: 9px;
    border: 2px solid #6a9dfa;
    border-radius: 6px;
    background: #fafafa;
    color: #528df9;
    font-size: 23px;
}
.wide {
    gap: 10px;
    padding-right: 40px;
}

/* file list */
.list {
    flex: 1;
    margin: 40px 81px 0 78px;
    border: 1px solid #ddd;
    padding-top: 1px;
}
.files {
    width: 100%;
    border-collapse: collapse;
    table-layout: fixed;
}
.files th {
    height: 80px;
    background: #f1f1f1;
    font-weight: 400;
    text-align: left;
    white-space: nowrap;
}
.files td {
    height: 99px;
    border-bottom: 1px solid #eee;
}
.c-name { width: 640px; }
.c-pages { width: 125px; }
.c-range { width: 270px; }
.c-format { width: 262px; }
.c-status { width: 202px; }
.c-run { width: 203px; }
.name-cell {
    display: flex;
    align-items: center;
    gap: 11px;
    padding-left: 41px;
    font-size: 23px;
}
.count {
    margin-left: 18px;
}
.muted {
    color: #7e8790;
}
.files .indent {
    padding-left: 40px;
}
.check {
    appearance: none;
    flex: none;
    width: 32px;
    height: 32px;
    border: 2px solid #6a9dfa;
    border-radius: 3px;
    background: #fff;
}
.check:checked {
    background: #528df9;
}
.check:checked::after {
    content: "";
    display: block;
    width: 8px;
    height: 15px;
    margin: 3px 0 0 10px;
    border: solid #fff;
    border-width: 0 2px 2px 0;
    transform: rotate(40deg);
}
.files .pages {
    padding-left: 30px;
    color: #444;
}
.range {
    display: flex;
    align-items: center;
    gap: 6px;
}
.range input {
    width: 79px;
    height: 43px;
    border: 2px solid #e6e8f4;
    text-align: center;
    color: #444;
}
.range i {
    width: 30px;
    height: 1px;
    background: #ccc;
}
.select-box {
    position: relative;
    width: 123px;
    margin-left: 7px;
}
.select-box::after {
    content: "";
    position: absolute;
    top: 20px;
    right: 18px;
    border: 7px solid transparent;
    border-top: 9px solid #555;
    border-bottom: 0;
}
.select-box select {
    appearance: none;
    width: 100%;
    height: 51px;
    padding-left: 12px;
    border: 1px solid #ddd;
}
.files .state,
.files .run,
.files .remove {
    padding-top: 6px;
}
.files .state {
    padding-left: 4px;
    color: #999;
}
.files .remove {
    padding-left: 29px;
}

/* options under the list */
.options {
    display: flex;
    flex: none;
    justify-content: space-between;
    height: 224px;
    padding: 32px 81px 0 130px;
}
.option-grid {
    display: grid;
    grid-template-columns: 200px 268px auto;
    grid-template-rows: 48px 48px;
    row-gap: 20px;
    column-gap: 18px;
    align-items: center;
    align-self: start;
    padding-top: 16px;
}
.caption {
    font-size: 23px;
    text-align: right;
}
.choices {
    display: flex;
    gap: 58px;
}
.pair-label {
    display: flex;
    align-items: center;
    gap: 5px;
    color: #999;
}
.dark {
    gap: 8px;
    color: #555;
    font-size: 23px;
}
.dark svg {
    margin-left: -4px;
}
.vip {
    fill: #7a2c0c;
    font-size: 16px;
    font-style: italic;
    font-weight: 800;
    text-anchor: middle;
}
input[type="radio"] {
    appearance: none;
    flex: none;
    width: 32px;
    height: 32px;
    border: 2px solid #6a9dfa;
    border-radius: 50%;
    background: #eef4ff;
}
input[type="radio"]:checked {
    background: radial-gradient(#528df9 8px, #fff 9px);
}
.custom {
    display: flex;
    align-items: center;
    gap: 56px;
}
.path {
    display: flex;
}
.path input {
    width: 425px;
    height: 48px;
    padding-left: 2px;
    border: 2px solid #e2e4f0;
    border-right: 0;
    color: #999;
}
.path button {
    width: 159px;
    height: 48px;
    border: 2px solid #d6dbea;
    border-radius: 0 4px 4px 0;
    background: #e4e6e6;
    color: #c8cacc;
}
.convert {
    width: 380px;
    height: 112px;
    border-radius: 6px;
    background: #528df9;
    color: #fff;
    font-size: 37px;
}
.arrow {
    position: absolute;
    right: 510px;
    bottom: 149px;
}
.frame {
    position: absolute;
    right: 42px;
    bottom: 24px;
    width: 456px;
    height: 194px;
    border: 8px solid #ee1c24;
    border-radius: 4px;
}

/* status bar */
.statusbar {
    display: flex;
    flex: none;
    align-items: center;
    height: 50px;
    padding: 7px 36px 0 46px;
    border-top: 2px solid #c9c9c9;
    background: #efefef;
    color: #666;
}
.statusbar svg {
    color: #666;
}
.status-left {
    display: flex;
    flex: 1;
    align-items: center;
    gap: 28px;
}
.status-left svg {
    color: #999;
}
.status-left span {
    margin-left: -10px;
    padding-left: 38px;
    border-left: 2px solid #fff;
    font-size: 23px;
}
.pager {
    display: flex;
    align-items: center;
    margin-right: 278px;
    gap: 41px;
}
.pager svg {
    fill: none;
    stroke: #777;
    stroke-width: 2;
}
.pager input {
    width: 214px;
    height: 38px;
    margin: 0 -14px;
    border: 2px solid #e4e4e4;
    background: #fff;
    text-align: center;
    color: #444;
}
.status-right {
    display: flex;
    align-items: center;
}
.bar {
    width: 2px;
    height: 36px;
    margin-right: 10px;
    background: #fff;
}
.view {
    display: flex;
    justify-content: center;
    width: 48px;
    height: 43px;
    margin-right: 12px;
    padding-top: 3px;
}
.on {
    background: #dfe1f1;
    border: 2px solid #c9cfe4;
    border-bottom: 0;
    padding-top: 1px;
}
.one {
    fill: #ff8b82;
    font-size: 15px;
    text-anchor: middle;
}
.zoom {
    margin: 0 20px 0 27px;
}
.minus {
    margin-left: 31px;
}
.status-right input {
    appearance: none;
    width: 180px;
    height: 24px;
    margin: 0 22px;
}
.status-right input::-webkit-slider-runnable-track {
    height: 6px;
    background: linear-gradient(to right, #666 46%, #c9c9c9 46%);
}
.status-right input::-webkit-slider-thumb {
    appearance: none;
    width: 20px;
    height: 22px;
    margin-top: -8px;
    border: 2px solid #666;
    border-radius: 50%;
    background: #fff;
}
.full {
    margin-left: 31px;
}
```
